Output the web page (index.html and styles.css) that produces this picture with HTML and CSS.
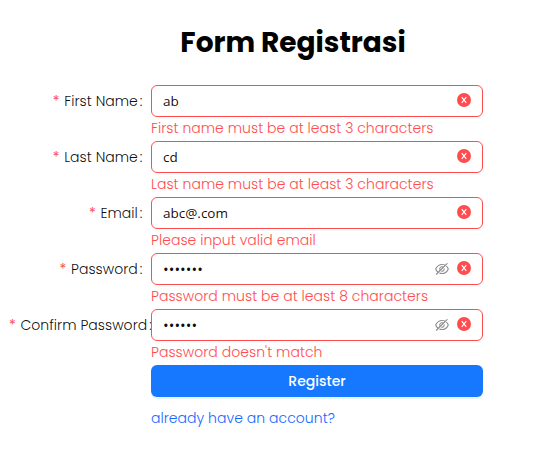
FILE: index.html
```html
<!DOCTYPE html>
<html lang="id">
<head>
<meta charset="utf-8">
<title>Form Registrasi</title>
<link rel="stylesheet" href="styles.css">
</head>
<body>
<svg width="0" height="0" class="sprite" aria-hidden="true">
  <symbol id="close" viewBox="0 0 14 14">
    <circle cx="7" cy="7" r="7" fill="#ff4d4f"/>
    <path d="M4.7 4.2 9.3 9.8M9.3 4.2 4.7 9.8" stroke="#fff" stroke-width="1.2" fill="none"/>
  </symbol>
  <symbol id="eye-off" viewBox="64 64 896 896">
    <path d="M942.2 486.2Q889.47 375.11 816.7 305l-50.88 50.88C807.31 395.53 843.45 447.4 874.7 512 791.5 684.2 673.4 766 512 766q-72.67 0-133.87-22.38L323 798.75Q408 838 512 838q288.3 0 430.2-300.3a60.29 60.29 0 000-51.5zm-63.57-320.64L836 122.88a8 8 0 00-11.32 0L715.31 232.2Q624.86 186 512 186q-288.3 0-430.2 300.3a60.3 60.3 0 000 51.5q56.69 119.4 136.5 191.41L112.48 835a8 8 0 000 11.31L155.17 889a8 8 0 0011.31 0l712.15-712.12a8 8 0 000-11.32zM149.3 512C232.6 339.8 350.7 258 512 258c54.54 0 104.13 9.36 149.12 28.39l-70.3 70.3a176 176 0 00-238.13 238.13l-83.42 83.42C223.1 637.49 183.3 582.28 149.3 512zm246.7 0a112.11 112.11 0 01146.2-106.69L401.31 546.2A112 112 0 01396 512z"/>
    <path d="M508 624c-3.46 0-6.87-.16-10.25-.47l-52.82 52.82a176.09 176.09 0 00227.42-227.42l-52.82 52.82c.31 3.38.47 6.79.47 10.25a111.94 111.94 0 01-112 112z"/>
  </symbol>
</svg>
<h1 class="title">Form Registrasi</h1>
<form class="form">
  <div class="row">
    <label class="label" for="first"><span class="star">*</span><span class="name">First Name</span><span class="colon">:</span></label>
    <div class="control">
      <div class="field"><input id="first" type="text" value="ab"><svg class="icon"><use href="#close"/></svg></div>
      <div class="error">First name must be at least 3 characters</div>
    </div>
  </div>
  <div class="row">
    <label class="label" for="last"><span class="star">*</span><span class="name">Last Name</span><span class="colon">:</span></label>
    <div class="control">
      <div class="field"><input id="last" type="text" value="cd"><svg class="icon"><use href="#close"/></svg></div>
      <div class="error">Last name must be at least 3 characters</div>
    </div>
  </div>
  <div class="row">
    <label class="label" for="email"><span class="star">*</span><span class="name">Email</span><span class="colon">:</span></label>
    <div class="control">
      <div class="field"><input id="email" type="text" value="abc@.com"><svg class="icon"><use href="#close"/></svg></div>
      <div class="error">Please input valid email</div>
    </div>
  </div>
  <div class="row">
    <label class="label" for="password"><span class="star">*</span><span class="name">Password</span><span class="colon">:</span></label>
    <div class="control">
      <div class="field"><input id="password" type="password" value="abcdefg"><svg class="icon eye"><use href="#eye-off"/></svg><svg class="icon"><use href="#close"/></svg></div>
      <div class="error">Password must be at least 8 characters</div>
    </div>
  </div>
  <div class="row">
    <label class="label" for="confirm"><span class="star">*</span><span class="name">Confirm Password</span><span class="colon">:</span></label>
    <div class="control">
      <div class="field"><input id="confirm" type="password" value="abcdef"><svg class="icon eye"><use href="#eye-off"/></svg><svg class="icon"><use href="#close"/></svg></div>
      <div class="error">Password doesn't match</div>
    </div>
  </div>
  <div class="actions">
    <button class="submit" type="button">Register</button>
    <a class="link" href="#">already have an account?</a>
  </div>
</form>
</body>
</html>
```
FILE: styles.css
```css
* { box-sizing: border-box; }
body {
  margin: 0;
  padding: 22px 0 0 9px;
  background: #fff;
  color: rgba(0, 0, 0, 0.95);
  font-family: Poppins, Inter, "Liberation Sans", sans-serif;
  font-size: 14px;
  font-weight: 300;
  line-height: 24px;
  letter-spacing: 0.04px;
}
.sprite { display: block; height: 0; }
.title {
  width: 568px;
  margin: 0 0 21px;
  color: #000;
  font-size: 28px;
  font-weight: 700;
  line-height: 42px;
  letter-spacing: 0;
  text-align: center;
}
.form { width: 474px; }
.row { display: flex; height: 56px; }
.label {
  flex: 0 0 142px;
  min-width: 0;
  height: 32px;
  line-height: 32px;
  text-align: right;
  white-space: nowrap;
}
.star { margin-right: 4.6px; color: #ff4d4f; font-weight: 400; }
.colon { margin: 0 8.5px 0 2px; }
.control { flex: 1; min-width: 0; }
.field {
  display: flex;
  align-items: center;
  height: 32px;
  padding: 0 11px;
  border: 1px solid #ff4d4f;
  border-radius: 6px;
  background: #fff;
}
.field input {
  flex: 1;
  min-width: 0;
  height: 22px;
  padding: 0;
  border: 0;
  outline: 0;
  background: none;
  color: rgba(0, 0, 0, 0.95);
  font: 400 13.5px/22px "Open Sans", sans-serif;
}
.field input[type="password"] {
  font-size: 15px;
  letter-spacing: 0.05px;
}
.icon { width: 14px; height: 14px; margin: 0 0 2px 8px; }
.eye { margin-bottom: 0; fill: rgba(0, 0, 0, 0.45); }
.error { color: #ff4d4f; line-height: 22px; white-space: nowrap; }
.actions { padding-left: 142px; }
.submit {
  display: block;
  width: 332px;
  height: 32px;
  padding: 0;
  border: 0;
  border-radius: 6px;
  background: #1677ff;
  box-shadow: 0 2px 0 rgba(5, 145, 255, 0.1);
  color: #fff;
  font: 500 14px/32px Poppins, Inter, sans-serif;
}
.link {
  display: block;
  margin-top: 9px;
  color: #1668ff;
  text-decoration: none;
}
```
